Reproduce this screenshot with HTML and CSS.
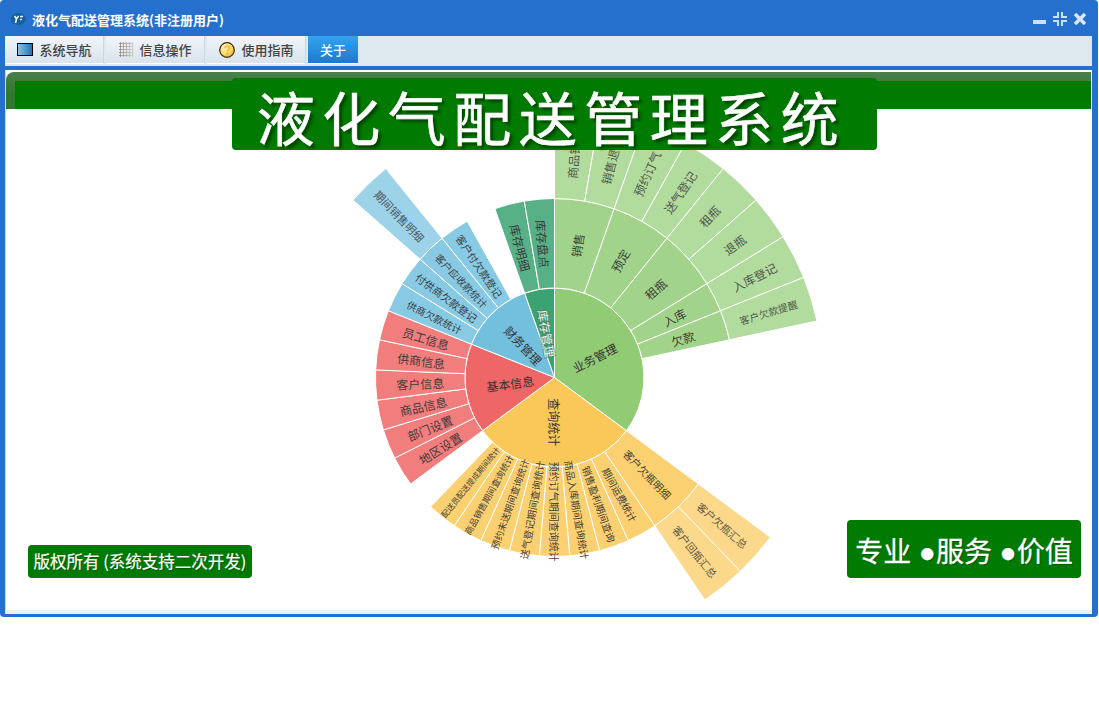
FILE: index.html
```html
<!DOCTYPE html>
<html lang="zh-CN">
<head>
<meta charset="utf-8">
<title>液化气配送管理系统</title>
<link rel="stylesheet" href="styles.css">
</head>
<body>
<div class="window">
  <header class="titlebar">
    <div class="app-title">
      <svg class="app-icon" width="15" height="14" viewBox="0 0 15 14"><ellipse cx="7.500" cy="7" rx="7.500" ry="6" fill="#17609f"/><path d="M3.500 4l2 3 2-3M5.500 7l-1 4" fill="none" stroke="#fff" stroke-width="1.500"/><path d="M9 4.500h3M9 7.500h2" stroke="#e8f1fa" stroke-width="1.300"/></svg>
      <span>液化气配送管理系统(非注册用户)</span>
    </div>
    <div class="win-buttons">
      <svg width="14" height="14" viewBox="0 0 14 14"><rect x="0" y="8" width="13" height="4" fill="#cfe0f5"/></svg>
      <svg width="16" height="16" viewBox="0 0 16 16"><path d="M6 1v5H1M10 1v5h5M6 15v-5H1M10 15v-5h5" fill="none" stroke="#cfe0f5" stroke-width="2"/></svg>
      <svg width="14" height="14" viewBox="0 0 14 14"><path d="M2 2l10 10M12 2L2 12" stroke="#dbe7f7" stroke-width="3.500"/></svg>
    </div>
  </header>
  <nav class="tabs">
    <div class="tab">
      <svg width="16" height="14" viewBox="0 0 16 14"><defs><linearGradient id="mon" x1="0" x2="1"><stop offset="0" stop-color="#8fc6e6"/><stop offset="1" stop-color="#1d6fae"/></linearGradient></defs><rect x="0.500" y="0.500" width="15" height="12" fill="url(#mon)" stroke="#000"/></svg>
      <span>系统导航</span>
    </div>
    <div class="tab">
      <svg width="14" height="15" viewBox="0 0 14 15"><defs><linearGradient id="grid" x1="0" x2="1"><stop offset="0" stop-color="#8a7d76"/><stop offset="1" stop-color="#c9c2bc"/></linearGradient></defs><path d="M1.500 0v15M4.500 0v15M7.500 0v15M10.500 0v15M13.500 0v15M0 1.500h14M0 4.500h14M0 7.500h14M0 10.500h14M0 13.500h14" stroke="url(#grid)" stroke-width="1" fill="none" opacity=".75"/></svg>
      <span>信息操作</span>
    </div>
    <div class="tab">
      <svg width="16" height="16" viewBox="0 0 16 16"><defs><radialGradient id="coin" cx=".35" cy=".3" r=".8"><stop offset="0" stop-color="#fff6c8"/><stop offset=".6" stop-color="#fcd85a"/><stop offset="1" stop-color="#eda02a"/></radialGradient></defs><circle cx="8" cy="8" r="7.300" fill="url(#coin)" stroke="#3b2a10" stroke-width="1.200"/><path d="M5.800 6.200c0-2.600 4.600-2.600 4.600 0 0 1.800-2.300 1.600-2.300 3.400M8.100 11v1.500" stroke="#f0b93a" stroke-width="1.500" fill="none"/></svg>
      <span>使用指南</span>
    </div>
    <div class="tab tab-active"><span>关于</span></div>
  </nav>
  <main class="content">
    <div class="banner"><div class="banner-inner"></div></div>
    <svg class="sunburst" id="sunburst" width="1085" height="540" viewBox="0 0 1085 540"></svg>
    <h1 class="headline">液化气配送管理系统</h1>
    <div class="badge copyright">版权所有 (系统支持二次开发)</div>
    <div class="badge slogan">专业 ●服务 ●价值</div>
  </main>
</div>
<script src="chart.js"></script>
</body>
</html>
```
FILE: styles.css
```css
* { box-sizing: border-box; }
html, body { margin: 0; padding: 0; background: #fff; }
body { font-family: "Noto Sans CJK SC", "Liberation Sans", sans-serif; width: 1099px; height: 723px; overflow: hidden; }
.window { width: 1098px; height: 617px; background: #256fcd; border-radius: 4px; padding: 0 5px 3px; display: flex; flex-direction: column; }
.titlebar { height: 36px; flex: none; display: flex; align-items: center; justify-content: space-between; padding: 2px 6px 0 6px; color: #fff; }
.app-title { display: flex; align-items: center; gap: 6px; font-size: 13px; font-weight: 700; }
.app-icon { flex: none; }
.win-buttons { display: flex; align-items: center; gap: 5px; }
.tabs { height: 30px; flex: none; margin-right: 1px; background: #dde8ef; display: flex; gap: 2px; padding: 0 0 2px 0; }
.tab { width: 99px; padding-left: 1px; display: flex; align-items: center; justify-content: center; gap: 6px; font-size: 13px; font-weight: 500; color: #444; background: linear-gradient(#f1f5f9, #d9e3ec); border-right: 1px solid #c9d6e3; border-bottom: 1px solid #fff; }
.tab-active { width: 50px; padding-left: 0; color: #fff; background: linear-gradient(#35a4ec, #1c78d2); border: 0; border-bottom: 1px solid #fff; }
.content { position: relative; flex: none; margin-top: 4px; height: 544px; margin-right: 1px; background: #fff; border-bottom: 4px solid #e9f1f6; border-left: 1px solid #d5dcc0; }
.banner { height: 37px; margin-top: 2px; margin-right: 1px; background: linear-gradient(#4c7f4c, #2f782f 60%); border-radius: 8px 0 0 0; padding: 9px 0 0 9px; }
.banner-inner { height: 28px; background: #007a00; }
.sunburst { position: absolute; left: 0; top: 0; }
.sunburst text { font-family: "Noto Sans CJK SC", sans-serif; text-anchor: middle; dominant-baseline: central; }
.headline { position: absolute; left: 226px; top: 8px; width: 645px; height: 72px; margin: 0; padding-right: 6px; background: #007a00; border-radius: 4px; color: #fff; font-size: 58px; font-weight: 400; line-height: 76px; letter-spacing: 7.5px; text-align: center; white-space: nowrap; -webkit-text-stroke: .6px #fff; text-shadow: 3px 3px 3px rgba(0, 0, 0, .45); }
.badge { position: absolute; background: #007a00; color: #fff; border-radius: 4px; text-align: center; white-space: nowrap; text-shadow: 1px 1px 1px rgba(0, 0, 0, .3); }
.copyright { left: 22px; top: 475px; width: 224px; height: 33px; font-size: 16.5px; line-height: 33px; -webkit-text-stroke: .2px #fff; }
.slogan { left: 841px; top: 450px; width: 234px; height: 58px; font-size: 28px; line-height: 66px; font-family: "Liberation Sans", "Noto Sans CJK SC", sans-serif; -webkit-text-stroke: .3px #fff; }
```
FILE: chart.js
```js
var U = 360 / 37, CX = 548.5, CY = 307.5, R = [0, 89.5, 179, 268.5];
var C = { g: '#91cc75', o: '#fac858', r: '#ee6666', b: '#73c0de', t: '#3ba272' };
// [ring, start unit, units, colour, label, font size]
var D = [
  [0, 0, 13, 'g', '业务管理', 12],
  [0, 13, 11, 'o', '查询统计', 12],
  [0, 24, 6, 'r', '基本信息', 12],
  [0, 30, 5, 'b', '财务管理', 12],
  [0, 35, 2, 't', '库存管理', 12],
  [1, 0, 2, 'g', '销售', 12], [1, 2, 2, 'g', '预定', 12], [1, 4, 2, 'g', '租瓶', 12], [1, 6, 1, 'g', '入库', 12], [1, 7, 1, 'g', '欠款', 12],
  [2, 0, 1, 'g', '商品销售', 12], [2, 1, 1, 'g', '销售退瓶', 12], [2, 2, 1, 'g', '预约订气', 12], [2, 3, 1, 'g', '送气登记', 12],
  [2, 4, 1, 'g', '租瓶', 12], [2, 5, 1, 'g', '退瓶', 12], [2, 6, 1, 'g', '入库登记', 12], [2, 7, 1, 'g', '客户欠款提醒', 10],
  [1, 13, 2, 'o', '客户欠瓶明细', 10.5], [1, 15, 1, 'o', '期间运费统计', 10], [1, 16, 1, 'o', '销售盈利期间查询', 10], [1, 17, 1, 'o', '商品入库期间查询统计', 10],
  [1, 18, 1, 'o', '预约订气期间查询统计', 10], [1, 19, 1, 'o', '送气登记期间查询统计', 10], [1, 20, 1, 'o', '预约未送期间查询统计', 9.5], [1, 21, 1, 'o', '商品销售期间查询统计', 9], [1, 22, 1, 'o', '配送员配送提成期间统计', 8],
  [2, 13, 1, 'o', '客户欠瓶汇总', 10.5], [2, 14, 1, 'o', '客户回瓶汇总', 10.5],
  [1, 24, 1, 'r', '地区设置', 12], [1, 25, 1, 'r', '部门设置', 12], [1, 26, 1, 'r', '商品信息', 12], [1, 27, 1, 'r', '客户信息', 12], [1, 28, 1, 'r', '供商信息', 12], [1, 29, 1, 'r', '员工信息', 12],
  [1, 30, 1, 'b', '供商欠款统计', 10], [1, 31, 1, 'b', '付供商欠款登记', 10.5], [1, 32, 1, 'b', '客户应收款统计', 10], [1, 33, 1, 'b', '客户付欠款登记', 10.5],
  [2, 32, 1, 'b', '期间销售明细', 11],
  [1, 35, 1, 't', '库存明细', 12], [1, 36, 1, 't', '库存盘点', 12]
];
var OP = [1, .85, .7], NS = 'http://www.w3.org/2000/svg', svg = document.getElementById('sunburst');
function pt(r, a) { var t = a * Math.PI / 180; return (CX + r * Math.sin(t)).toFixed(2) + ' ' + (CY - r * Math.cos(t)).toFixed(2); }
function el(n, attrs, parent) { var e = document.createElementNS(NS, n); for (var k in attrs) e.setAttribute(k, attrs[k]); parent.appendChild(e); return e; }
D.forEach(function (d) {
  var a0 = d[1] * U, a1 = (d[1] + d[2]) * U, r0 = R[d[0]], r1 = R[d[0] + 1], big = a1 - a0 > 180 ? 1 : 0;
  var p = 'M' + pt(r1, a0) + 'A' + r1 + ' ' + r1 + ' 0 ' + big + ' 1 ' + pt(r1, a1);
  p += r0 ? 'L' + pt(r0, a1) + 'A' + r0 + ' ' + r0 + ' 0 ' + big + ' 0 ' + pt(r0, a0) + 'Z' : 'L' + CX + ' ' + CY + 'Z';
  el('path', { d: p, fill: C[d[3]], 'fill-opacity': OP[d[0]], stroke: '#fff', 'stroke-width': 1 }, svg);
});
D.forEach(function (d) {
  var mid = (d[1] + d[2] / 2) * U, r = (R[d[0]] + R[d[0] + 1]) / 2, t = mid * Math.PI / 180;
  var x = CX + r * Math.sin(t), y = CY - r * Math.cos(t);
  var rot = mid <= 180 ? mid - 90 : mid - 270;
  var isStock = d[4] === '库存管理';
  var attrs = {
    x: x.toFixed(2), y: y.toFixed(2), 'font-size': d[5],
    transform: 'rotate(' + rot.toFixed(2) + ' ' + x.toFixed(2) + ' ' + y.toFixed(2) + ')',
    fill: isStock ? '#eaf5ee' : '#333', 'fill-opacity': isStock ? 1 : OP[d[0]] + .1
  };
  if (isStock) { attrs.stroke = 'rgba(80,120,100,.55)'; attrs['stroke-width'] = 2; attrs['paint-order'] = 'stroke'; }
  el('text', attrs, svg).textContent = d[4];
});
```
